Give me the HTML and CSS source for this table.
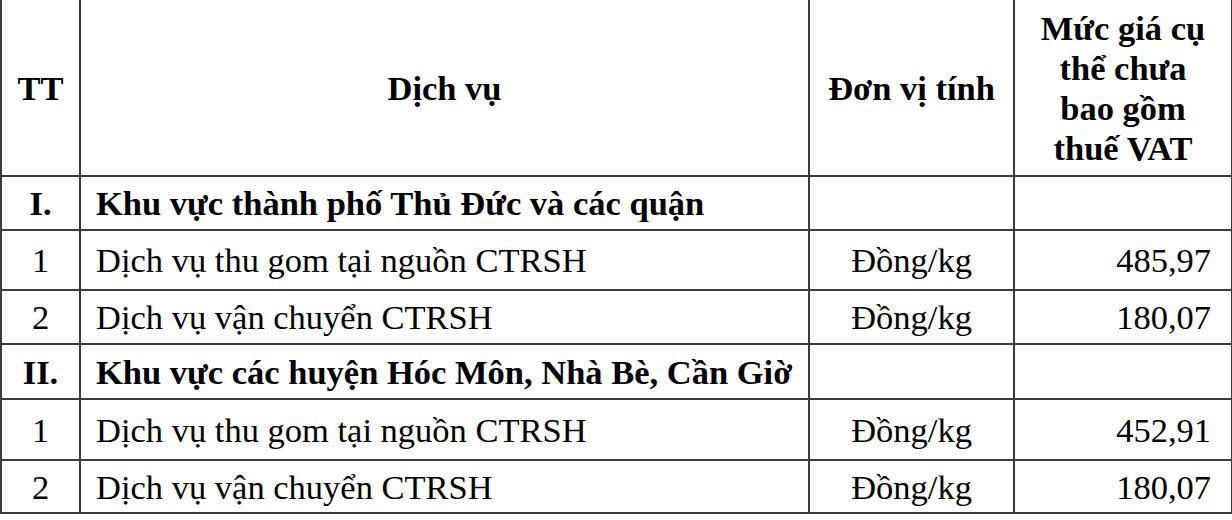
FILE: index.html
```html
<!DOCTYPE html>
<html lang="vi">
<head>
<meta charset="utf-8">
<title>Bảng giá</title>
<link rel="stylesheet" href="styles.css">
</head>
<body>
<table class="price-table">
  <colgroup>
    <col class="c-tt">
    <col class="c-dv">
    <col class="c-unit">
    <col class="c-price">
  </colgroup>
  <thead>
    <tr class="r-head">
      <th>TT</th>
      <th>Dịch vụ</th>
      <th>Đơn vị tính</th>
      <th class="th-price">Mức giá cụ thể chưa bao gồm thuế VAT</th>
    </tr>
  </thead>
  <tbody>
    <tr class="r-group r1">
      <td class="tt">I.</td>
      <td class="name">Khu vực thành phố Thủ Đức và các quận</td>
      <td></td>
      <td></td>
    </tr>
    <tr class="r2">
      <td class="tt">1</td>
      <td class="name">Dịch vụ thu gom tại nguồn CTRSH</td>
      <td class="unit">Đồng/kg</td>
      <td class="price">485,97</td>
    </tr>
    <tr class="r3">
      <td class="tt">2</td>
      <td class="name">Dịch vụ vận chuyển CTRSH</td>
      <td class="unit">Đồng/kg</td>
      <td class="price">180,07</td>
    </tr>
    <tr class="r-group r4">
      <td class="tt">II.</td>
      <td class="name">Khu vực các huyện Hóc Môn, Nhà Bè, Cần Giờ</td>
      <td></td>
      <td></td>
    </tr>
    <tr class="r5">
      <td class="tt">1</td>
      <td class="name">Dịch vụ thu gom tại nguồn CTRSH</td>
      <td class="unit">Đồng/kg</td>
      <td class="price">452,91</td>
    </tr>
    <tr class="r6">
      <td class="tt">2</td>
      <td class="name">Dịch vụ vận chuyển CTRSH</td>
      <td class="unit">Đồng/kg</td>
      <td class="price">180,07</td>
    </tr>
  </tbody>
</table>
</body>
</html>
```

FILE: styles.css
```css
html, body {
  margin: 0;
  padding: 0;
  background: #ffffff;
}

.price-table {
  border-collapse: collapse;
  table-layout: fixed;
  width: 1231px;
  font-family: "Liberation Serif", "Times New Roman", serif;
  font-size: 34.5px;
  line-height: 40px;
  color: #000;
}

.c-tt { width: 79px; }
.c-dv { width: 729px; }
.c-unit { width: 205px; }
.c-price { width: 218px; }

.price-table th,
.price-table td {
  border: 2px solid #3c3c3c;
  padding: 0 15px;
  vertical-align: middle;
  font-family: "Liberation Serif", "Times New Roman", serif;
}

.price-table th {
  font-weight: bold;
  text-align: center;
  border-top: none;
}

.r-head { height: 176px; }
.r1 { height: 54px; }
.r2 { height: 60px; }
.r3 { height: 54px; }
.r4 { height: 55px; }
.r5 { height: 61px; }
.r6 { height: 53px; }

.price-table .th-price {
  padding: 0 22px;
}

.price-table .tt {
  text-align: center;
  padding: 0;
}

.r-group td {
  font-weight: bold;
}

.unit {
  text-align: center;
}

.price-table .price {
  text-align: right;
  padding-right: 20px;
}
```
